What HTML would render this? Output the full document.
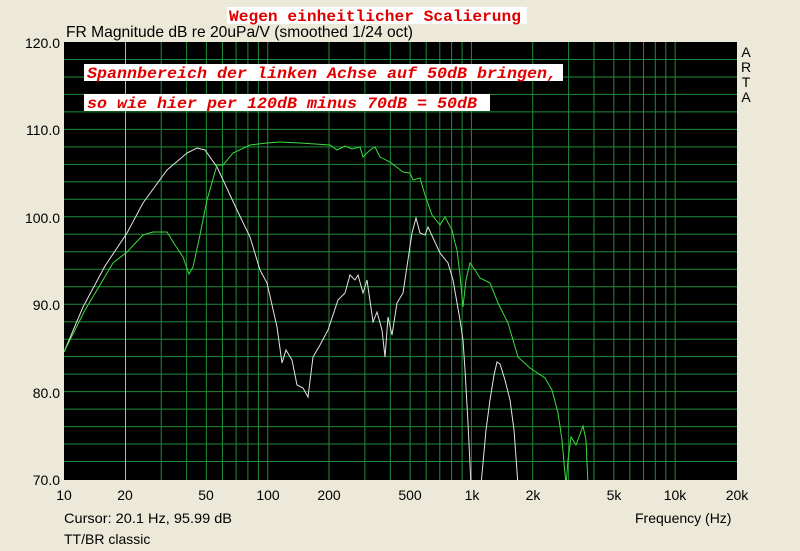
<!DOCTYPE html>
<html><head><style>
body{margin:0;width:800px;height:551px;background:#ECE9D8;overflow:hidden;font-family:"Liberation Sans",Arial,sans-serif;}
svg{position:absolute;left:0;top:0}
</style></head><body>
<svg width="800" height="551" viewBox="0 0 800 551" xmlns="http://www.w3.org/2000/svg">
<rect x="64" y="42" width="673" height="438" fill="#000"/>
<g stroke="#1f8a3a" stroke-width="1">
<path d="M161.2 42V480M186.6 42V480M206.4 42V480M222.5 42V480M236.1 42V480M247.9 42V480M258.4 42V480M267.7 42V480M329 42V480M364.9 42V480M390.3 42V480M410.1 42V480M426.2 42V480M439.8 42V480M451.6 42V480M462.1 42V480M471.4 42V480M532.7 42V480M568.6 42V480M594 42V480M613.8 42V480M629.9 42V480M643.5 42V480M655.3 42V480M665.8 42V480M675.1 42V480"/>
<path d="M64 59.5H737M64 77H737M64 94.4H737M64 111.9H737M64 129.4H737M64 146.9H737M64 164.4H737M64 181.8H737M64 199.3H737M64 216.8H737M64 234.3H737M64 251.8H737M64 269.2H737M64 286.7H737M64 304.2H737M64 321.7H737M64 339.2H737M64 356.6H737M64 374.1H737M64 391.6H737M64 409.1H737M64 426.6H737M64 444H737M64 461.5H737"/>
</g>
<path d="M125.5 42V480" stroke="#c8c820" stroke-width="1"/>
<svg x="64" y="42" width="673" height="438" viewBox="64 42 673 438">
<polyline fill="none" stroke="#e4e4e4" stroke-width="1" points="64,352 83,307 105,266 127,233 143,203 167,170 187,153 197,148 205,150 217,167 237,210 250,237 260,270 267,283 277,327 282,363 286,350 292,360 297,385 303,388 308,397 313,357 320,345 328,330 338,300 345,293 350,275 355,280 358,275 363,293 367,280 373,322 377,312 382,330 385,357 388,317 392,335 397,303 403,293 412,233 416,218 420,233 425,235 428,227 440,253 448,263 453,280 460,320 463,340 465,370 468,423 471,485"/>
<polyline fill="none" stroke="#e4e4e4" stroke-width="1" points="481,485 486,430 490,400 494,375 497,362 500,364 505,380 510,400 514,430 518,485"/>
<polyline fill="none" stroke="#3cdc3c" stroke-width="1" points="64,352 85,310 100,285 113,263 127,252 143,235 153,232 167,232 175,245 183,257 189,274 193,267 200,235 207,200 217,165 223,165 233,153 250,145 267,143 280,142 300,143 330,145 337,150 345,146 352,149 360,147 363,157 370,150 375,147 380,157 390,162 403,172 410,173 413,180 420,178 425,195 432,215 440,225 445,217 452,230 455,243 457,250 460,275 463,307 466,280 470,263 475,270 480,278 490,283 498,303 508,323 518,357 530,368 545,378 552,390 558,413 562,440 566,485 568,460 571,437 576,445 583,426 586,440 588,485"/>
</svg>
<rect x="227" y="7" width="300" height="17" fill="#fff"/>
<text x="229" y="21" font-family="Liberation Mono,monospace" font-weight="bold" font-size="16" fill="#e00000" textLength="292" lengthAdjust="spacingAndGlyphs">Wegen einheitlicher Scalierung</text>
<rect x="84" y="64" width="479" height="17" fill="#fff"/>
<text x="87" y="78" font-family="Liberation Mono,monospace" font-weight="bold" font-style="italic" font-size="16" fill="#e00000" textLength="470" lengthAdjust="spacingAndGlyphs">Spannbereich der linken Achse auf 50dB bringen,</text>
<rect x="84" y="94" width="406" height="17" fill="#fff"/>
<text x="87" y="108" font-family="Liberation Mono,monospace" font-weight="bold" font-style="italic" font-size="16" fill="#e00000" textLength="390" lengthAdjust="spacingAndGlyphs">so wie hier per 120dB minus 70dB = 50dB</text>
<g font-family="Liberation Sans,Arial,sans-serif" font-size="14" fill="#000">
<text x="66" y="37" font-size="16" textLength="347" lengthAdjust="spacingAndGlyphs">FR Magnitude dB re 20uPa/V (smoothed 1/24 oct)</text>
<text x="60" y="48" text-anchor="end">120.0</text>
<text x="60" y="135" text-anchor="end">110.0</text>
<text x="60" y="223" text-anchor="end">100.0</text>
<text x="60" y="310" text-anchor="end">90.0</text>
<text x="60" y="398" text-anchor="end">80.0</text>
<text x="60" y="485" text-anchor="end">70.0</text>
<g text-anchor="middle">
<text x="64" y="500">10</text>
<text x="125" y="500">20</text>
<text x="206" y="500">50</text>
<text x="268" y="500">100</text>
<text x="329" y="500">200</text>
<text x="410" y="500">500</text>
<text x="472" y="500">1k</text>
<text x="533" y="500">2k</text>
<text x="614" y="500">5k</text>
<text x="675" y="500">10k</text>
<text x="737" y="500">20k</text>
<text x="746" y="57">A</text>
<text x="746" y="72">R</text>
<text x="746" y="87">T</text>
<text x="746" y="102">A</text>
</g>
<text x="64" y="523" textLength="168" lengthAdjust="spacingAndGlyphs">Cursor: 20.1 Hz, 95.99 dB</text>
<text x="64" y="544">TT/BR classic</text>
<text x="635" y="523">Frequency (Hz)</text>
</g>
</svg>
</body></html>
